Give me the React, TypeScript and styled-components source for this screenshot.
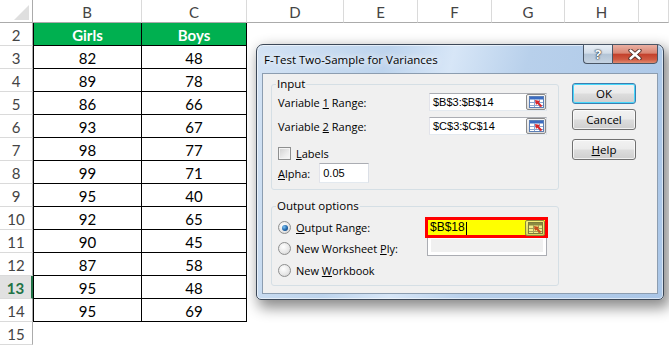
import React from "react";
import styled, { createGlobalStyle, css } from "styled-components";

const GlobalStyle = createGlobalStyle`
  html, body {
    margin: 0;
    padding: 0;
    background: #fff;
  }
  body {
    width: 669px;
    height: 345px;
    overflow: hidden;
  }
`;

const COLUMNS = ["B", "C", "D", "E", "F", "G", "H", ""];
const GIRLS = [82, 89, 86, 93, 98, 99, 95, 92, 90, 87, 95, 95];
const BOYS = [48, 78, 66, 67, 77, 71, 40, 65, 45, 58, 48, 69];
const ACTIVE_ROW = 13;

const Stage = styled.div`
  position: relative;
  width: 669px;
  height: 345px;
  overflow: hidden;
`;

/* ---------- sheet ---------- */

const SheetGrid = styled.div`
  display: grid;
  grid-template-columns: 33px 109px 105px 97px 74px 74px 73px 74px 1fr;
  grid-auto-rows: 23px;
  font-family: Lato, "Liberation Sans", sans-serif;
  font-size: 15px;
`;

const Corner = styled.div`
  box-sizing: border-box;
  border-right: 1px solid #ababab;
  border-bottom: 1px solid #ababab;
  display: flex;
  align-items: flex-end;
  justify-content: flex-end;
  padding: 0 3px 2px 0;
`;

const ColHead = styled.div`
  box-sizing: border-box;
  border-right: 1px solid #dadada;
  border-bottom: 1px solid #ababab;
  display: flex;
  align-items: center;
  justify-content: center;
  color: #444;
  padding-top: 1px;
`;

const RowHead = styled.div<{ $active?: boolean }>`
  box-sizing: border-box;
  border-right: 1px solid #ababab;
  border-bottom: 1px solid #dadada;
  display: flex;
  align-items: center;
  justify-content: center;
  color: #444;
  padding-top: 1px;
  ${(p) =>
    p.$active &&
    css`
      background: #e1e1e1;
      color: #217346;
      font-weight: 700;
      border-right: 2px solid #217346;
    `}
`;

const Cell = styled.div<{ $kind: "head" | "value" | "blank"; $first?: boolean }>`
  box-sizing: border-box;
  display: flex;
  align-items: center;
  justify-content: center;
  padding-top: 1px;
  color: #000;
  ${(p) =>
    p.$kind !== "blank" &&
    css`
      border-right: 1px solid #000;
      border-bottom: 1px solid #000;
    `}
  ${(p) =>
    p.$kind !== "blank" &&
    p.$first &&
    css`
      border-left: 1px solid #000;
    `}
  ${(p) =>
    p.$kind === "head" &&
    css`
      background: #00b050;
      color: #fff;
      font-weight: 700;
    `}
`;

function Sheet() {
  const rows = [];
  for (let r = 2; r <= 15; r++) {
    const idx = r - 3;
    rows.push(
      <React.Fragment key={r}>
        <RowHead $active={r === ACTIVE_ROW}>{r}</RowHead>
        {COLUMNS.map((col, c) => {
          if (c > 1 || r === 15) return <Cell key={c} $kind="blank" />;
          if (r === 2)
            return (
              <Cell key={c} $kind="head" $first={c === 0}>
                {c === 0 ? "Girls" : "Boys"}
              </Cell>
            );
          return (
            <Cell key={c} $kind="value" $first={c === 0}>
              {c === 0 ? GIRLS[idx] : BOYS[idx]}
            </Cell>
          );
        })}
      </React.Fragment>
    );
  }
  return (
    <SheetGrid>
      <Corner>
        <svg width="15" height="15" viewBox="0 0 15 15">
          <polygon points="0,15 15,0 15,15" fill="#dfdfdf" />
        </svg>
      </Corner>
      {COLUMNS.map((c, i) => (
        <ColHead key={i}>{c}</ColHead>
      ))}
      {rows}
    </SheetGrid>
  );
}

/* ---------- dialog ---------- */

const Window = styled.div`
  position: absolute;
  left: 256px;
  top: 44px;
  width: 408px;
  height: 256px;
  box-sizing: border-box;
  padding: 0 5px 5px 5px;
  display: flex;
  flex-direction: column;
  border: 1px solid #3c4858;
  border-radius: 7px 7px 5px 5px;
  background: linear-gradient(
    105deg,
    #d4e3f4 0%,
    #bdd4ed 28%,
    #d7e6f7 42%,
    #b8d0eb 58%,
    #aac6e7 100%
  );
  box-shadow: inset 0 0 0 1px rgba(255, 255, 255, 0.55),
    4px 6px 14px 2px rgba(0, 0, 0, 0.45);
  font-family: "Open Sans", "Liberation Sans", sans-serif;
  font-size: 11px;
  color: #000;
`;

const TitleBar = styled.div`
  height: 28px;
  display: flex;
  align-items: flex-start;
  justify-content: space-between;
`;

const Title = styled.div`
  padding: 7px 0 0 2px;
  font-size: 11.5px;
  text-shadow: 0 0 6px #fff, 0 0 10px rgba(255, 255, 255, 0.9);
`;

const CaptionButtons = styled.div`
  display: flex;
  margin-top: -1px;
`;

const CaptionButton = styled.div<{ $kind: "help" | "close" }>`
  box-sizing: border-box;
  height: 20px;
  display: flex;
  align-items: center;
  justify-content: center;
  border: 1px solid #4a5666;
  ${(p) =>
    p.$kind === "help"
      ? css`
          width: 29px;
          border-right: none;
          border-radius: 0 0 0 4px;
          background: linear-gradient(
            180deg,
            #e9eff6 0%,
            #d2dde9 45%,
            #b3c4d6 52%,
            #c5d3e2 100%
          );
          color: #fff;
          font-weight: 700;
          font-size: 13px;
          text-shadow: 0 0 1px #2b3642, 0 0 1px #2b3642, 0 0 2px #2b3642;
        `
      : css`
          width: 46px;
          border-radius: 0 0 4px 0;
          background: linear-gradient(
            180deg,
            #eab0a3 0%,
            #d98572 45%,
            #c3412c 52%,
            #cf5a42 80%,
            #e08a70 100%
          );
        `}
`;

const Client = styled.div`
  flex: 1;
  box-sizing: border-box;
  background: #f0f0f0;
  border: 1px solid #8c9db0;
  display: grid;
  grid-template-columns: 288px 64px;
  column-gap: 13px;
  align-items: start;
  padding: 3px 0 0 8px;
`;

const Groups = styled.div`
  display: flex;
  flex-direction: column;
  gap: 9px;
`;

const Group = styled.fieldset<{ $height: number }>`
  box-sizing: border-box;
  height: ${(p) => p.$height}px;
  margin: 0;
  padding: 0 11px 0 6px;
  border: 1px solid #d5dfe5;
  border-radius: 3px;
  min-width: 0;
`;

const Legend = styled.legend`
  margin-left: -2px;
  padding: 0 1px;
  line-height: 14px;
  font-size: 11.5px;
`;

const FieldRow = styled.div<{ $gap?: number }>`
  display: grid;
  grid-template-columns: 1fr 118px;
  align-items: center;
  height: 18px;
  margin-top: ${(p) => p.$gap ?? 0}px;
`;

const FieldLabel = styled.span`
  white-space: nowrap;
`;

const TextBox = styled.div<{ $width?: number; $height?: number }>`
  box-sizing: border-box;
  width: ${(p) => (p.$width ? `${p.$width}px` : "auto")};
  height: ${(p) => p.$height ?? 18}px;
  display: flex;
  align-items: center;
  justify-content: space-between;
  background: #fff;
  border: 1px solid #abadb3;
  border-left-color: #e2e3ea;
  border-right-color: #dbdfe6;
  border-bottom-color: #e3e9ef;
  padding-left: 3px;
  font-family: "Liberation Sans", Arial, sans-serif;
  font-size: 11px;
`;

const RefButton = styled.div<{ $tint?: boolean }>`
  box-sizing: border-box;
  width: 20px;
  height: 16px;
  display: flex;
  align-items: center;
  justify-content: center;
  border: 1px solid ${(p) => (p.$tint ? "#8d8a3a" : "#8a8a8a")};
  border-radius: 2px;
  background: ${(p) =>
    p.$tint
      ? "linear-gradient(180deg, #f4f07a 0%, #d9d45a 100%)"
      : "linear-gradient(180deg, #f6f6f6 0%, #dcdcdc 100%)"};
`;

function RefIcon({ tint }: { tint?: boolean }) {
  const frame = tint ? "#7d7d3a" : "#5b7fb6";
  const head = tint ? "#8a8a40" : "#3b6cc2";
  const line = tint ? "#a3a05a" : "#8ba7d1";
  const fill = tint ? "#f2ee8a" : "#ffffff";
  const arrow = tint ? "#c8501c" : "#d8262a";
  return (
    <svg width="15" height="12" viewBox="0 0 15 12">
      <rect x="0.5" y="0.5" width="14" height="11" fill={fill} stroke={frame} />
      <rect x="1" y="1" width="13" height="2.5" fill={head} />
      <line x1="1" y1="6.5" x2="14" y2="6.5" stroke={line} />
      <line x1="1" y1="9.5" x2="14" y2="9.5" stroke={line} />
      <line x1="5.5" y1="3" x2="5.5" y2="11" stroke={line} />
      <line x1="10.5" y1="3" x2="10.5" y2="11" stroke={line} />
      <line x1="12.5" y1="10.5" x2="8" y2="6" stroke={arrow} strokeWidth="2" />
      <polygon points="6,4 11,5 7,9" fill={arrow} />
    </svg>
  );
}

function RangeField({ value }: { value: string }) {
  return (
    <TextBox>
      <span>{value}</span>
      <RefButton>
        <RefIcon />
      </RefButton>
    </TextBox>
  );
}

const CheckRow = styled.label`
  display: flex;
  align-items: center;
  gap: 5px;
  height: 16px;
  margin-top: 10px;
`;

const CheckBox = styled.span`
  box-sizing: border-box;
  width: 13px;
  height: 13px;
  border: 1px solid #8e8f8f;
  background: linear-gradient(135deg, #cfcfcf 0%, #ececec 60%, #fafafa 100%);
  box-shadow: inset 0 0 0 1px #f4f4f4;
`;

const AlphaRow = styled.div`
  display: flex;
  align-items: center;
  gap: 9px;
  margin-top: 2px;
  height: 20px;
`;

const OptionRow = styled.div<{ $gap?: number; $height: number }>`
  display: grid;
  grid-template-columns: 1fr 120px;
  align-items: center;
  height: ${(p) => p.$height}px;
  margin-top: ${(p) => p.$gap ?? 0}px;
`;

const RadioLabel = styled.label<{ $nudge?: number }>`
  display: flex;
  align-items: center;
  gap: 5px;
  white-space: nowrap;
  padding-top: ${(p) => p.$nudge ?? 0}px;
`;

const Radio = styled.span<{ $checked?: boolean }>`
  box-sizing: border-box;
  width: 13px;
  height: 13px;
  border-radius: 50%;
  border: 1px solid #8e8f8f;
  background: radial-gradient(circle at 40% 35%, #ffffff 0%, #e6e6e6 60%, #c8c8c8 100%);
  display: flex;
  align-items: center;
  justify-content: center;
  ${(p) =>
    p.$checked &&
    css`
      &::after {
        content: "";
        width: 6px;
        height: 6px;
        border-radius: 50%;
        background: radial-gradient(circle at 35% 35%, #7cc4f5 0%, #1f64a8 55%, #0d3a6e 100%);
      }
    `}
`;

const HighlightField = styled.div`
  position: relative;
  z-index: 1;
  box-sizing: border-box;
  height: 21px;
  margin: 0 -1px 0 -2px;
  border: 3px solid #ff0000;
  background: #ffff00;
  display: flex;
  align-items: center;
  justify-content: space-between;
  padding-left: 2px;
  font-family: "Liberation Sans", Arial, sans-serif;
  font-size: 12px;
`;

const Caret = styled.span`
  display: inline-block;
  width: 1px;
  height: 13px;
  margin-left: 1px;
  background: #000;
  vertical-align: middle;
`;

const DisabledBox = styled.div`
  box-sizing: border-box;
  height: 21px;
  margin-top: -3px;
  border: 1px solid #abadb3;
  background: #fff;
  padding: 3px;
  &::after {
    content: "";
    display: block;
    height: 100%;
    background: #f0f0f0;
  }
`;

const ButtonColumn = styled.div`
  display: flex;
  flex-direction: column;
  gap: 5px;
  padding-top: 6px;
`;

const PushButton = styled.div<{ $focused?: boolean; $gap?: number }>`
  box-sizing: border-box;
  height: 21px;
  display: flex;
  align-items: center;
  justify-content: center;
  border: 1px solid ${(p) => (p.$focused ? "#3c7fb1" : "#707070")};
  border-radius: 3px;
  background: linear-gradient(180deg, #f2f2f2 0%, #ebebeb 48%, #dddddd 52%, #cfcfcf 100%);
  box-shadow: inset 0 0 0 1px ${(p) => (p.$focused ? "#48d8fb" : "rgba(255,255,255,0.7)")};
  margin-top: ${(p) => p.$gap ?? 0}px;
  font-size: 11.5px;
`;

function FTestDialog() {
  return (
    <Window>
      <TitleBar>
        <Title>F-Test Two-Sample for Variances</Title>
        <CaptionButtons>
          <CaptionButton $kind="help">?</CaptionButton>
          <CaptionButton $kind="close">
            <svg width="14" height="11" viewBox="0 0 14 11">
              <path d="M2.5 1.5 L11.5 9.5 M11.5 1.5 L2.5 9.5" stroke="#4a2a24" strokeWidth="4.2" strokeLinecap="round" />
              <path d="M2.5 1.5 L11.5 9.5 M11.5 1.5 L2.5 9.5" stroke="#fff" strokeWidth="2.4" strokeLinecap="round" />
            </svg>
          </CaptionButton>
        </CaptionButtons>
      </TitleBar>
      <Client>
        <Groups>
          <Group $height={113}>
            <Legend>Input</Legend>
            <FieldRow $gap={2}>
              <FieldLabel>
                Variable <u>1</u> Range:
              </FieldLabel>
              <RangeField value="$B$3:$B$14" />
            </FieldRow>
            <FieldRow $gap={6}>
              <FieldLabel>
                Variable <u>2</u> Range:
              </FieldLabel>
              <RangeField value="$C$3:$C$14" />
            </FieldRow>
            <CheckRow>
              <CheckBox />
              <span>
                <u>L</u>abels
              </span>
            </CheckRow>
            <AlphaRow>
              <FieldLabel>
                <u>A</u>lpha:
              </FieldLabel>
              <TextBox $width={50} $height={20}>
                0.05
              </TextBox>
            </AlphaRow>
          </Group>
          <Group $height={87}>
            <Legend>Output options</Legend>
            <OptionRow $gap={4} $height={21}>
              <RadioLabel>
                <Radio $checked />
                <span>
                  <u>O</u>utput Range:
                </span>
              </RadioLabel>
              <HighlightField>
                <span>
                  $B$18
                  <Caret />
                </span>
                <RefButton $tint>
                  <RefIcon tint />
                </RefButton>
              </HighlightField>
            </OptionRow>
            <OptionRow $height={18}>
              <RadioLabel $nudge={2}>
                <Radio />
                <span>
                  New Worksheet <u>P</u>ly:
                </span>
              </RadioLabel>
              <DisabledBox />
            </OptionRow>
            <OptionRow $gap={5} $height={18}>
              <RadioLabel>
                <Radio />
                <span>
                  New <u>W</u>orkbook
                </span>
              </RadioLabel>
            </OptionRow>
          </Group>
        </Groups>
        <ButtonColumn>
          <PushButton $focused>OK</PushButton>
          <PushButton>Cancel</PushButton>
          <PushButton $gap={4}>
            <span>
              <u>H</u>elp
            </span>
          </PushButton>
        </ButtonColumn>
      </Client>
    </Window>
  );
}

export default function App() {
  return (
    <>
      <GlobalStyle />
      <Stage>
        <Sheet />
        <FTestDialog />
      </Stage>
    </>
  );
}
